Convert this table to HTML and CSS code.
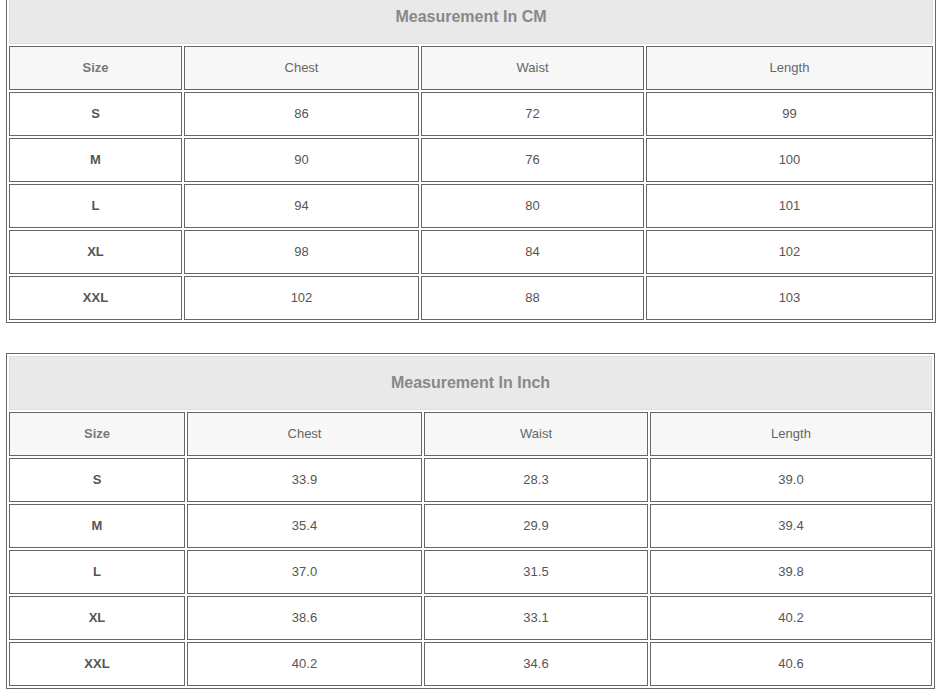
FILE: index.html
```html
<!DOCTYPE html>
<html>
<head>
<meta charset="utf-8">
<link rel="stylesheet" href="styles.css">
</head>
<body>
<div class="page">
  <table class="size-table first">
    <tr><td class="title" colspan="4">Measurement In CM</td></tr>
    <tr class="head">
      <td class="c-size w1a">Size</td><td class="w2a">Chest</td><td class="w3a">Waist</td><td class="w4a">Length</td>
    </tr>
    <tr><td class="c-size">S</td><td>86</td><td>72</td><td>99</td></tr>
    <tr><td class="c-size">M</td><td>90</td><td>76</td><td>100</td></tr>
    <tr><td class="c-size">L</td><td>94</td><td>80</td><td>101</td></tr>
    <tr><td class="c-size">XL</td><td>98</td><td>84</td><td>102</td></tr>
    <tr><td class="c-size">XXL</td><td>102</td><td>88</td><td>103</td></tr>
  </table>

  <table class="size-table second">
    <tr><td class="title" colspan="4">Measurement In Inch</td></tr>
    <tr class="head">
      <td class="c-size w1b">Size</td><td class="w2b">Chest</td><td class="w3b">Waist</td><td class="w4b">Length</td>
    </tr>
    <tr><td class="c-size">S</td><td>33.9</td><td>28.3</td><td>39.0</td></tr>
    <tr><td class="c-size">M</td><td>35.4</td><td>29.9</td><td>39.4</td></tr>
    <tr><td class="c-size">L</td><td>37.0</td><td>31.5</td><td>39.8</td></tr>
    <tr><td class="c-size">XL</td><td>38.6</td><td>33.1</td><td>40.2</td></tr>
    <tr><td class="c-size">XXL</td><td>40.2</td><td>34.6</td><td>40.6</td></tr>
  </table>
</div>
</body>
</html>
```

FILE: styles.css
```css
html, body {
  margin: 0;
  padding: 0;
  background: #ffffff;
}
.page {
  padding-left: 6px;
  font-family: "Liberation Sans", Arial, sans-serif;
}
.size-table {
  border: 1px solid #666;
  border-collapse: separate;
  border-spacing: 2px;
  table-layout: auto;
  width: 930px;
}
.size-table.first {
  margin-top: -13px;
}
.size-table.second {
  margin-top: 30px;
  width: 929px;
}
.size-table td {
  box-sizing: border-box;
  border: 1px solid #666;
  height: 44px;
  padding: 0 0 2px 0;
  text-align: center;
  vertical-align: middle;
  font-size: 13px;
  color: #555;
}
.size-table td.title {
  height: 54px;
  padding: 0;
  background: #e9e9e9;
  border: 1px solid #dedede;
  color: #888;
  font-size: 16px;
  font-weight: bold;
}
.size-table .head td {
  background: #f7f7f7;
  color: #666;
}
.size-table td.c-size {
  font-weight: bold;
  color: #555;
}
.size-table .head td.c-size {
  color: #777;
}
.w1a { width: 173px; }
.w2a { width: 235px; }
.w3a { width: 223px; }
.w4a { width: 287px; }
.w1b { width: 176px; }
.w2b { width: 235px; }
.w3b { width: 224px; }
.w4b { width: 282px; }
```
